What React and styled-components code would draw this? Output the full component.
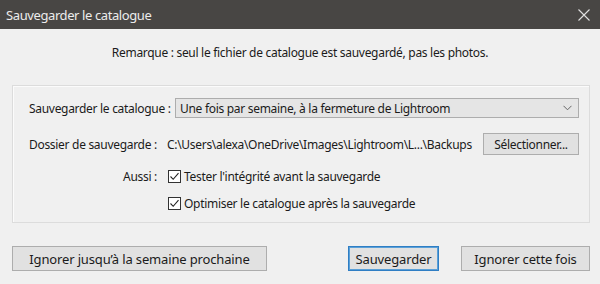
import React from "react";
import styled, { createGlobalStyle } from "styled-components";

const GlobalStyle = createGlobalStyle`
  html, body { margin: 0; padding: 0; background: #f0f0f0; }
  body { font-family: "Noto Sans", "Open Sans", sans-serif; }
`;

const Window = styled.div`
  width: 600px;
  height: 284px;
  background: #f0f0f0;
  display: flex;
  flex-direction: column;
  color: #1b1b1b;
  font-size: 12px;
  letter-spacing: -0.3px;
  overflow: hidden;
`;

const TitleBar = styled.div`
  height: 29px;
  flex: none;
  background: #484644;
  color: #ececec;
  display: flex;
  align-items: center;
  justify-content: space-between;
  padding: 0 10px 0 6px;
  font-size: 13px;
  letter-spacing: -0.4px;
`;

const CloseIcon = styled.svg`
  width: 12px;
  height: 12px;
  display: block;
`;

const Note = styled.div`
  text-align: center;
  margin-top: 15px;
  height: 17px;
  line-height: 17px;
`;

const Group = styled.div`
  margin: 24px 10px 0 12px;
  height: 138px;
  box-sizing: border-box;
  border: 1px solid #dcdcdc;
  box-shadow: inset 1px 1px 0 #fbfbfb;
  display: flex;
  flex-direction: column;
  padding: 12px 10px 0 16px;
`;

const Row = styled.div`
  display: flex;
  align-items: center;
  height: ${(p) => p.$h || 20}px;
  margin-top: ${(p) => p.$mt || 0}px;
`;

const Label = styled.div`
  width: ${(p) => p.$w}px;
  flex: none;
  text-align: ${(p) => (p.$right ? "right" : "left")};
  white-space: nowrap;
`;

const Select = styled.div`
  flex: 1;
  height: 20px;
  box-sizing: border-box;
  border: 1px solid #adadad;
  background: #e5e5e5;
  display: flex;
  align-items: center;
  justify-content: space-between;
  padding: 0 6px 0 4px;
`;

const Chevron = styled.svg`
  width: 9px;
  height: 6px;
  display: block;
`;

const Path = styled.div`
  flex: 1;
  white-space: nowrap;
`;

const Button = styled.div`
  height: ${(p) => p.$h || 25}px;
  width: ${(p) => p.$w}px;
  box-sizing: border-box;
  border: 1px solid ${(p) => (p.$primary ? "#2f7ec4" : "#adadad")};
  box-shadow: ${(p) => (p.$primary ? "inset 0 0 0 1px #5aa0d8" : "none")};
  background: #e1e1e1;
  display: flex;
  align-items: center;
  justify-content: center;
  white-space: nowrap;
  font-size: ${(p) => p.$fs || 12}px;
  letter-spacing: ${(p) => (p.$fs ? "-0.15px" : "-0.3px")};
  flex: none;
`;

const CheckBox = styled.div`
  width: 13px;
  height: 13px;
  box-sizing: border-box;
  border: 1px solid #333;
  background: #fff;
  margin-right: 3px;
  display: flex;
  align-items: center;
  justify-content: center;
  flex: none;
`;

const Indent = styled.div`
  flex: none;
  width: ${(p) => p.$w}px;
`;

const Footer = styled.div`
  display: flex;
  align-items: center;
  margin-top: 23px;
  padding: 0 10px 0 12px;
`;

const Spacer = styled.div`
  flex: 1;
`;

const Check = () => (
  <CheckBox>
    <svg width="11" height="11" viewBox="0 0 11 11">
      <path d="M1.5 5.5 L4.2 8.3 L9.5 2.2" fill="none" stroke="#222" strokeWidth="1.1" />
    </svg>
  </CheckBox>
);

export default function App() {
  return (
    <>
      <GlobalStyle />
      <Window>
        <TitleBar>
          <span>Sauvegarder le catalogue</span>
          <CloseIcon viewBox="0 0 12 12">
            <path d="M0.5 0.5 L11.5 11.5 M11.5 0.5 L0.5 11.5" stroke="#e0e0e0" strokeWidth="1.1" />
          </CloseIcon>
        </TitleBar>
        <Note>Remarque : seul le fichier de catalogue est sauvegardé, pas les photos.</Note>
        <Group>
          <Row>
            <Label $w={146}>Sauvegarder le catalogue :</Label>
            <Select>
              <span>Une fois par semaine, à la fermeture de Lightroom</span>
              <Chevron viewBox="0 0 9 6">
                <path d="M0.5 0.8 L4.5 4.8 L8.5 0.8" fill="none" stroke="#666" strokeWidth="1" />
              </Chevron>
            </Select>
          </Row>
          <Row $h={22} $mt={15}>
            <Label $w={138}>Dossier de sauvegarde :</Label>
            <Path>C:\Users\alexa\OneDrive\Images\Lightroom\L...\Backups</Path>
            <Button $w={96} $h={22}>Sélectionner...</Button>
          </Row>
          <Row $mt={11}>
            <Label $w={128} $right>Aussi :</Label>
            <Indent $w={11} />
            <Check />
            <span>Tester l'intégrité avant la sauvegarde</span>
          </Row>
          <Row $mt={7}>
            <Indent $w={139} />
            <Check />
            <span>Optimiser le catalogue après la sauvegarde</span>
          </Row>
        </Group>
        <Footer>
          <Button $w={255} $fs={13}>Ignorer jusqu’à la semaine prochaine</Button>
          <Spacer />
          <Button $w={91} $fs={13} $primary>Sauvegarder</Button>
          <Indent $w={22} />
          <Button $w={129} $fs={13}>Ignorer cette fois</Button>
        </Footer>
      </Window>
    </>
  );
}
